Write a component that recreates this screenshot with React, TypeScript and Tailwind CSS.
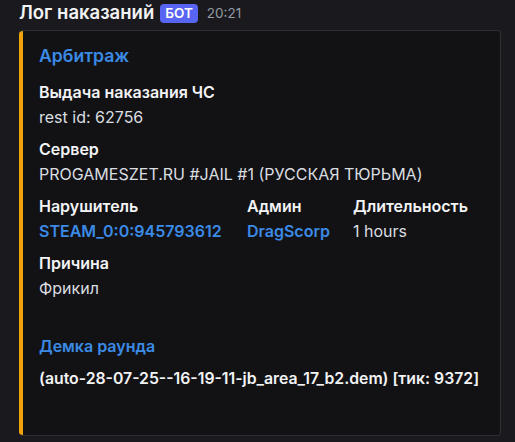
export default function App() {
  const fields = [
    { name: 'Выдача наказания ЧС', value: 'rest id: 62756' },
    { name: 'Сервер', value: 'PROGAMESZET.RU #JAIL #1 (РУССКАЯ ТЮРЬМА)' },
  ];

  return (
    <div
      className="min-h-[442px] w-[515px] bg-[#1a1a1e] pl-[19px] pr-[14px] text-[#dbdee1]"
      style={{ fontFamily: 'Inter, "Noto Sans", sans-serif' }}
    >
      <div className="flex h-[30px] items-center pb-[4px]">
        <span className="text-[18.5px] font-semibold text-[#f2f3f5]">Лог наказаний</span>
        <span className="ml-[6px] flex h-[19px] items-center rounded-[4px] bg-[#5865f2] px-[5px] text-[13.5px] font-semibold text-white">
          БОТ
        </span>
        <span className="ml-[9px] text-[13.5px] text-[#949ba4]">20:21</span>
      </div>

      <div className="flex h-[406px] overflow-hidden rounded-[4px] border border-l-0 border-[#2e2f34] bg-[#121214]">
        <div className="w-[4px] shrink-0 bg-[#f0a30a]" />
        <div className="flex flex-col pl-[16px] pt-[14px] text-[16px] leading-[20px]">
          <div className="text-[17.6px] font-semibold leading-[22px] text-[#3b8ae6]">Арбитраж</div>

          <div className="mt-[15px] flex flex-col gap-[12px]">
            {fields.map((f) => (
              <div key={f.name} className="flex flex-col gap-[5px]">
                <div className="font-semibold text-[#f2f3f5]">{f.name}</div>
                <div>{f.value}</div>
              </div>
            ))}

            <div className="flex">
              <div className="flex w-[208px] flex-col gap-[5px]">
                <div className="font-semibold text-[#f2f3f5]">Нарушитель</div>
                <div className="font-semibold text-[#3b8ae6]">STEAM_0:0:945793612</div>
              </div>
              <div className="flex w-[106px] flex-col gap-[5px]">
                <div className="font-semibold text-[#f2f3f5]">Админ</div>
                <div className="font-semibold text-[#3b8ae6]">DragScorp</div>
              </div>
              <div className="flex flex-col gap-[5px]">
                <div className="font-semibold text-[#f2f3f5]">Длительность</div>
                <div>1 hours</div>
              </div>
            </div>

            <div className="flex flex-col gap-[5px]">
              <div className="font-semibold text-[#f2f3f5]">Причина</div>
              <div>Фрикил</div>
            </div>

            <div className="mt-[26px] flex flex-col gap-[13px]">
              <div className="font-semibold text-[#3b8ae6]">Демка раунда</div>
              <div className="text-[15.8px] font-semibold text-[#f2f3f5]">
                (auto-28-07-25--16-19-11-jb_area_17_b2.dem) [тик: 9372]
              </div>
            </div>
          </div>
        </div>
      </div>
    </div>
  );
}
